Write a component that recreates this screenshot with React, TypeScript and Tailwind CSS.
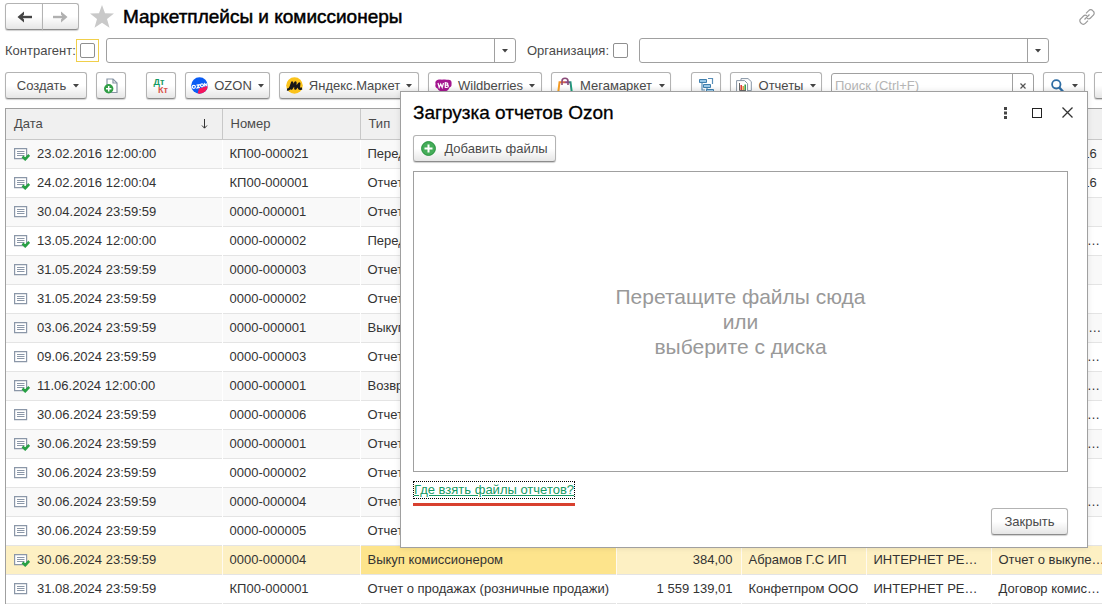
import React from 'react';

interface Report {
  date: string;
  number: string;
  type: string;
  sum?: string;
  partner?: string;
  company?: string;
  contract?: string;
  posted?: boolean;
}

const reports: Report[] = [
  { date: '23.02.2016 12:00:00', number: 'КП00-000021', type: 'Передача товаров', contract: '№11 от 23.02.16', posted: true },
  { date: '24.02.2016 12:00:04', number: 'КП00-000001', type: 'Отчет о продажах', contract: '№11 от 23.02.16', posted: true },
  { date: '30.04.2024 23:59:59', number: '0000-000001', type: 'Отчет о продажах' },
  { date: '13.05.2024 12:00:00', number: '0000-000002', type: 'Передача товаров', contract: 'Договор комиссии', posted: true },
  { date: '31.05.2024 23:59:59', number: '0000-000003', type: 'Отчет о продажах' },
  { date: '31.05.2024 23:59:59', number: '0000-000002', type: 'Отчет о продажах' },
  { date: '03.06.2024 23:59:59', number: '0000-000001', type: 'Выкуп комиссионером', contract: 'Соглашение о комиссии' },
  { date: '09.06.2024 23:59:59', number: '0000-000003', type: 'Отчет о продажах', contract: 'Договор комиссии' },
  { date: '11.06.2024 12:00:00', number: '0000-000001', type: 'Возврат товаров', contract: 'Договор комиссии', posted: true },
  { date: '30.06.2024 23:59:59', number: '0000-000006', type: 'Отчет о продажах', contract: 'Договор комиссии' },
  { date: '30.06.2024 23:59:59', number: '0000-000001', type: 'Отчет о продажах', contract: 'Договор комиссии', posted: true },
  { date: '30.06.2024 23:59:59', number: '0000-000002', type: 'Отчет о продажах' },
  { date: '30.06.2024 23:59:59', number: '0000-000004', type: 'Отчет о продажах', contract: 'Договор комиссии' },
  { date: '30.06.2024 23:59:59', number: '0000-000005', type: 'Отчет о продажах' },
  {
    date: '30.06.2024 23:59:59',
    number: '0000-000004',
    type: 'Выкуп комиссионером',
    sum: '384,00',
    partner: 'Абрамов Г.С ИП',
    company: 'ИНТЕРНЕТ РЕШЕНИЯ',
    contract: 'Отчет о выкупе товаров',
    posted: true,
  },
  {
    date: '31.08.2024 23:59:59',
    number: 'КП00-000001',
    type: 'Отчет о продажах (розничные продажи)',
    sum: '1 559 139,01',
    partner: 'Конфетпром ООО',
    company: 'ИНТЕРНЕТ РЕШЕНИЯ',
    contract: 'Договор комиссии',
  },
];

const SELECTED_ROW = 14;

const buttonClass =
  'flex h-[27px] shrink-0 items-center justify-center rounded-[3px] border border-[#b3b3b3] border-b-[#8c8c8c] bg-linear-to-b from-white from-50% to-[#e6e6e6] text-[#4a4a4a] shadow-[0_1px_1px_#d0d0d0]';

const Caret: React.FC = () => (
  <svg width="6" height="4" viewBox="0 0 6 4" className="shrink-0">
    <path d="M0 0h6L3 3.6z" fill="#444" />
  </svg>
);

const StarIcon: React.FC = () => (
  <svg width="24" height="23" viewBox="0 0 24 23" className="shrink-0">
    <path d="M12 0l3 8.3 9 .3-7 5.5 2.5 8.7L12 17.8l-7.5 5L7 14.100 0 8.600l9-.3z" fill="#c9c9c9" />
  </svg>
);

const ArrowIcon: React.FC<{ color: string; forward?: boolean }> = ({ color, forward }) => (
  <svg width="15" height="12" viewBox="0 0 15 12">
    <path
      d={forward ? 'M0 6h10' : 'M15 6H5'}
      stroke={color}
      strokeWidth="2.400"
    />
    <path
      d={forward ? 'M8 .5L14.500 6 8 11.500V8.500L10 6 8 3.500z' : 'M7 .5L.5 6 7 11.500V8.500L5 6 7 3.500z'}
      fill={color}
    />
  </svg>
);

const LinkIcon: React.FC = () => (
  <svg width="16" height="16" viewBox="0 0 16 16" fill="none" stroke="#9a9a9a" strokeWidth="1.200">
    <path d="M7 4.300l2.700-2.700a2.700 2.700 0 0 1 4 0l.6.600a2.700 2.700 0 0 1 0 4L11.500 9a2.700 2.700 0 0 1-3.500.2" />
    <path d="M9 11.700l-2.700 2.700a2.700 2.700 0 0 1-4 0l-.6-.6a2.700 2.700 0 0 1 0-4L4.500 7A2.700 2.700 0 0 1 8 6.800" />
    <path d="M5.500 10.500l5-5" />
  </svg>
);

const CopyIcon: React.FC = () => (
  <svg width="14" height="16" viewBox="0 0 14 16">
    <path d="M3 1h6l4 4v9.500H3z" fill="#fff" stroke="#8795a5" strokeWidth="1.200" />
    <path d="M9 1v4h4" fill="none" stroke="#8795a5" strokeWidth="1.200" />
    <circle cx="4.700" cy="10.700" r="4.700" fill="#2f9e45" />
    <path d="M4.700 8v5.400M2 10.700h5.400" stroke="#fff" strokeWidth="1.500" />
  </svg>
);

const OzonIcon: React.FC = () => (
  <svg width="17" height="17" viewBox="0 0 17 17">
    <clipPath id="ozon-disc">
      <circle cx="8.500" cy="8.500" r="8.300" />
    </clipPath>
    <g clipPath="url(#ozon-disc)">
      <rect width="17" height="17" fill="#0a5cf5" />
      <path d="M17 8.500L8 11.500 6.500 17H17z" fill="#f5155c" />
      <g fill="none" stroke="#fff" strokeWidth="1.200">
        <ellipse cx="2.800" cy="9.800" rx="1.600" ry="1.500" />
        <path d="M5.500 8.200l2.700-.4-2 3 2.700-.5" />
        <ellipse cx="11" cy="8.300" rx="1.500" ry="1.500" />
        <path d="M13.700 9.500V6.800l2.300 2V6" />
      </g>
    </g>
  </svg>
);

const YandexIcon: React.FC = () => (
  <svg width="17" height="17" viewBox="0 0 17 17">
    <circle cx="8.500" cy="8.500" r="8.300" fill="#fbc31c" />
    <path
      d="M1 12.500c2.300.3 2.900-.8 3.600-2.700l1.600-4.300-.7 6.200 4-6.300-.2 6.300 4-5.200-.4 4.200c0 1.500 1.300 1.200 3.100.6"
      fill="none"
      stroke="#171717"
      strokeWidth="2.300"
      strokeLinejoin="round"
    />
  </svg>
);

const WildberriesIcon: React.FC = () => (
  <svg width="17" height="13" viewBox="0 0 17 13">
    <path d="M1.500 1.500C4-.5 6 1 8 .6c2.500-.6 4 .2 5.500.2 2.300 0 3.500 1.700 3 4.200.3 2-.5 3-2 3.500-1 3-3 4.200-6 4-3 .2-5-.6-6-3C.3 8.500 0 6.500.6 5 0 3.500.3 2.300 1.500 1.500z" fill="#a3158f" />
    <path d="M3 4l1.200 4.500L5.700 5l1.500 3.500L8.500 4M10.300 3.700v4.800h1.500c2 0 2-2.400.2-2.400h-1.500 1c1.900 0 1.700-2.300 0-2.300z" fill="none" stroke="#fff" strokeWidth="1.200" />
  </svg>
);

const MegamarketIcon: React.FC = () => (
  <svg width="16" height="17" viewBox="0 0 16 17" fill="none">
    <linearGradient id="mega-bag" x1="0" x2="1">
      <stop offset="0" stopColor="#f5a623" />
      <stop offset=".35" stopColor="#ef6a35" />
      <stop offset=".65" stopColor="#7b3f98" />
      <stop offset="1" stopColor="#14a577" />
    </linearGradient>
    <path d="M2.500 5.200h11l1.300 10.300H1.200z" stroke="url(#mega-bag)" strokeWidth="2" />
    <path d="M5 8V4.200C5 .3 11 .3 11 4.200V8" stroke="#8a4a78" strokeWidth="1.600" />
  </svg>
);

const StructureIcon: React.FC = () => (
  <svg width="16" height="18" viewBox="0 0 16 18" fill="none">
    <path d="M10 1.500h4.500V7M4 6v7h3M9 10v6h4" stroke="#5a8fb8" strokeWidth="1.200" />
    <g fill="#9cc9e8" stroke="#3f7fae">
      <path d="M1.500 2.500h7v3h-7zM5.500 7.500h7v3h-7zM8.500 12.500h7v3h-7z" />
    </g>
  </svg>
);

const ReportsIcon: React.FC = () => (
  <svg width="16" height="16" viewBox="0 0 16 16">
    <path d="M5 .6h7l3.300 3v9H5z" fill="#fff" stroke="#8795a5" />
    <path d="M.6 2.600h8l3 3v9.800H.6z" fill="#fff" stroke="#8795a5" />
    <path d="M3.500 5v7.500H10" fill="none" stroke="#666" />
    <path d="M5.200 7v5" stroke="#d33" strokeWidth="1.500" />
    <path d="M7.200 8v4" stroke="#e39a35" strokeWidth="1.500" />
    <path d="M9.200 6.500V12" stroke="#2f9e45" strokeWidth="1.500" />
  </svg>
);

const SearchIcon: React.FC = () => (
  <svg width="13" height="14" viewBox="0 0 13 14" fill="none" stroke="#2e6da4">
    <circle cx="5.300" cy="5.300" r="4.200" strokeWidth="1.800" />
    <path d="M8.300 8.500l4 4.500" strokeWidth="2.500" />
  </svg>
);

const AddIcon: React.FC = () => (
  <svg width="15" height="15" viewBox="0 0 15 15">
    <circle cx="7.500" cy="7.500" r="6.900" fill="#45ad59" stroke="#25913c" />
    <path d="M7.500 3.500v8M3.500 7.500h8" stroke="#fff" strokeWidth="2" />
  </svg>
);

const DocumentIcon: React.FC<{ posted?: boolean }> = ({ posted }) => (
  <svg width="16" height="14" viewBox="0 0 16 14" className="shrink-0" fill="none">
    <path d="M.6 1.600h12v10H.6z" fill="#fff" stroke="#8b97a8" strokeWidth="1.200" />
    <path d="M3 4.500h7.500M3 6.500h7.500M3 8.500h7.500" stroke="#8b97a8" />
    {posted && <path d="M8.500 9.500l2.700 2.700 4-4.200" stroke="#27a044" strokeWidth="2.600" />}
  </svg>
);

interface ComboBoxProps {
  id: string;
  label: string;
}

const ComboBox: React.FC<ComboBoxProps> = ({ id, label }) => (
  <div className="flex h-[25px] min-w-0 flex-1 rounded-[3px] border border-[#a0a0a0]">
    <input id={id} type="text" aria-label={label} className="min-w-0 flex-1 px-2 outline-none" />
    <button type="button" aria-label="Выбрать" className="flex w-[21px] items-center justify-center border-l border-[#a0a0a0]">
      <Caret />
    </button>
  </div>
);

const checkboxClass = 'block size-[15px] appearance-none rounded-[2px] border border-[#8f8f8f] bg-white';

const Filters: React.FC = () => (
  <div className="mt-[9px] flex h-[25px] items-center pr-[53px] pl-[5px] text-[#4a4a4a]">
    <label htmlFor="partner" className="w-[71px] shrink-0">Контрагент:</label>
    <span className="mr-[7px] shrink-0 border border-[#f0cf4b] p-[3px]">
      <input type="checkbox" aria-label="Отбор по контрагенту" className={checkboxClass} />
    </span>
    <ComboBox id="partner" label="Контрагент" />
    <label htmlFor="company" className="ml-[11px] w-[86px] shrink-0">Организация:</label>
    <input type="checkbox" aria-label="Отбор по организации" className={`${checkboxClass} mr-[11px] shrink-0`} />
    <ComboBox id="company" label="Организация" />
  </div>
);

const Toolbar: React.FC = () => (
  <div className="mt-[9px] flex gap-[9px] pl-[5px]">
    <button type="button" className={`${buttonClass} w-[82px] gap-[7px] pl-1`}>
      Создать
      <Caret />
    </button>
    <button type="button" aria-label="Скопировать" className={`${buttonClass} w-[30px]`}>
      <CopyIcon />
    </button>
    <button type="button" className={`${buttonClass} ml-[11px] w-[30px] text-[9px] leading-[8px] font-bold`}>
      <span className="flex flex-col">
        <span className="pr-1 text-[#159a63]">Дт</span>
        <span className="pl-1 text-[#d9534a]">Кт</span>
      </span>
    </button>
    <button type="button" className={`${buttonClass} w-[85px] gap-[6px]`}>
      <OzonIcon />
      OZON
      <Caret />
    </button>
    <button type="button" className={`${buttonClass} w-[140px] gap-[6px]`}>
      <YandexIcon />
      Яндекс.Маркет
      <Caret />
    </button>
    <button type="button" className={`${buttonClass} w-[114px] gap-[6px]`}>
      <WildberriesIcon />
      Wildberries
      <Caret />
    </button>
    <button type="button" className={`${buttonClass} w-[120px] gap-[7px]`}>
      <MegamarketIcon />
      Мегамаркет
      <Caret />
    </button>
    <button type="button" aria-label="Структура подчиненности" className={`${buttonClass} ml-[11px] w-[30px]`}>
      <StructureIcon />
    </button>
    <button type="button" className={`${buttonClass} w-[92px] gap-[7px]`}>
      <ReportsIcon />
      Отчеты
      <Caret />
    </button>
    <div className="mt-px flex h-[25px] min-w-[203px] flex-1 rounded-[3px] border border-[#a0a0a0]">
      <input
        type="text"
        aria-label="Поиск"
        placeholder="Поиск (Ctrl+F)"
        className="min-w-0 flex-1 px-[3px] outline-none placeholder:text-[#b5b5b5]"
      />
      <button type="button" aria-label="Очистить" className="flex w-[21px] items-center justify-center border-l border-[#a0a0a0]">
        <svg width="6" height="6" viewBox="0 0 6 6" stroke="#555" strokeWidth="1.200">
          <path d="M.5.5l5 5M5.500.5l-5 5" />
        </svg>
      </button>
    </div>
    <button type="button" aria-label="Найти" className={`${buttonClass} w-[42px] gap-2`}>
      <SearchIcon />
      <Caret />
    </button>
    <button type="button" aria-label="Еще" className={`${buttonClass} -mr-[22px] w-[30px]`} />
  </div>
);

const headClass = 'border-l border-[#c8c8c8] px-2 text-left font-normal first:border-l-0';

interface ReportRowProps {
  report: Report;
  isSelected: boolean;
}

const ReportRow: React.FC<ReportRowProps> = ({ report, isSelected }) => {
  const cellClass = `truncate border-l pl-[7px] first:border-l-0 ${isSelected ? 'border-[#fffaf0]' : 'border-transparent'}`;

  return (
    <tr className={`h-[29px] border-b border-[#e4e4e4] ${isSelected ? 'bg-[#fdf0c3]' : 'odd:bg-[#f9f9f9]'}`}>
      <td className={cellClass}>
        <span className="flex items-center gap-[7px] pl-px">
          <DocumentIcon posted={report.posted} />
          {report.date}
        </span>
      </td>
      <td className={cellClass}>{report.number}</td>
      <td className={`${cellClass} ${isSelected ? 'bg-[#fde48c]' : ''}`}>{report.type}</td>
      <td className={`${cellClass} pr-2 text-right`}>{report.sum}</td>
      <td className={cellClass}>{report.partner}</td>
      <td className={`${cellClass} pr-2`}>{report.company}</td>
      <td className={cellClass}>{report.contract}</td>
    </tr>
  );
};

const ReportTable: React.FC = () => (
  <div className="mt-[9px] -mr-[3px] ml-[5px] border-t border-l border-[#a0a0a0]">
    <table className="w-full table-fixed border-collapse text-[#333]">
      <colgroup>
        <col className="w-[216px]" />
        <col className="w-[138px]" />
        <col className="w-[256px]" />
        <col className="w-[125px]" />
        <col className="w-[125px]" />
        <col className="w-[125px]" />
        <col />
      </colgroup>
      <thead>
        <tr className="h-[30px] border-b border-[#c8c8c8] bg-[#f0f0f0] text-[#4a4a4a]">
          <th className={headClass}>
            <span className="flex items-center justify-between pr-[6px]">
              Дата
              <svg width="7" height="10" viewBox="0 0 7 10" fill="none" stroke="#333">
                <path d="M3.500 0v9M1 6.500l2.500 2.700L6 6.500" />
              </svg>
            </span>
          </th>
          <th className={headClass}>Номер</th>
          <th className={headClass}>Тип</th>
          <th className={headClass} />
          <th className={headClass} />
          <th className={headClass} />
          <th className={headClass} />
        </tr>
      </thead>
      <tbody>
        {reports.map((report, index) => (
          <ReportRow key={index} report={report} isSelected={index === SELECTED_ROW} />
        ))}
      </tbody>
    </table>
  </div>
);

const UploadDialog: React.FC = () => (
  <div
    role="dialog"
    aria-labelledby="upload-title"
    className="absolute top-[91px] right-[14px] left-[400px] border border-[#a0a0a0] bg-white px-3 pb-3 shadow-[0_0_6px_#0000001a]"
  >
    <div className="mb-[2px] flex h-[41px] items-center justify-between">
      <h2 id="upload-title" className="text-[19px] text-black [-webkit-text-stroke:0.300px_black]">
        Загрузка отчетов Ozon
      </h2>
      <div className="flex items-center gap-[21px] pr-[2px]">
        <button type="button" aria-label="Меню" className="flex w-3 justify-center">
          <svg width="3" height="12" viewBox="0 0 3 12" fill="#444">
            <path d="M0 0h3v3H0zM0 4.500h3v3H0zM0 9h3v3H0z" />
          </svg>
        </button>
        <button type="button" aria-label="Развернуть" className="size-[10px] border border-[#222]" />
        <button type="button" aria-label="Закрыть окно" className="-ml-px">
          <svg width="11" height="11" viewBox="0 0 11 11" stroke="#333" strokeWidth="1.300">
            <path d="M.5.5l10 10M10.500.5l-10 10" />
          </svg>
        </button>
      </div>
    </div>
    <button type="button" className={`${buttonClass} w-[143px] gap-2`}>
      <AddIcon />
      Добавить файлы
    </button>
    <div className="mt-[9px] mr-[7px] flex h-[301px] items-center justify-center border border-[#a0a0a0] text-center text-[21px] leading-[25px] text-[#999]">
      <p>
        Перетащите файлы сюда
        <br />
        или
        <br />
        выберите с диска
      </p>
    </div>
    <div className="mt-[9px] flex">
      <div className="border-b-3 border-[#d8402f] pb-1">
        <a href="#help" className="block border border-dotted border-black leading-[16px] text-[#159a63] underline">
          Где взять файлы отчетов?
        </a>
      </div>
    </div>
    <button type="button" className={`${buttonClass} mt-[2px] mr-[7px] ml-auto w-[77px]`}>
      Закрыть
    </button>
  </div>
);

export default function App() {
  return (
    <main className="relative min-h-screen overflow-hidden bg-white pt-1 font-['Liberation_Sans',Arial,sans-serif] text-[13px] leading-[16px]">
      <header className="flex h-[25px] items-center pr-[7px] pl-[5px]">
        <div className="flex">
          <button type="button" aria-label="Назад" className={`${buttonClass} h-[25px] w-[38px] rounded-r-none`}>
            <ArrowIcon color="#444" />
          </button>
          <button type="button" aria-label="Вперед" className={`${buttonClass} -ml-px h-[25px] w-[37px] rounded-l-none`}>
            <ArrowIcon color="#b0b0b0" forward />
          </button>
        </div>
        <button type="button" aria-label="В избранное" className="ml-[11px]">
          <StarIcon />
        </button>
        <h1 className="ml-[9px] flex-1 text-[19px] text-black [-webkit-text-stroke:0.500px_black]">
          Маркетплейсы и комиссионеры
        </h1>
        <button type="button" aria-label="Получить ссылку">
          <LinkIcon />
        </button>
      </header>
      <Filters />
      <Toolbar />
      <ReportTable />
      <UploadDialog />
    </main>
  );
}
